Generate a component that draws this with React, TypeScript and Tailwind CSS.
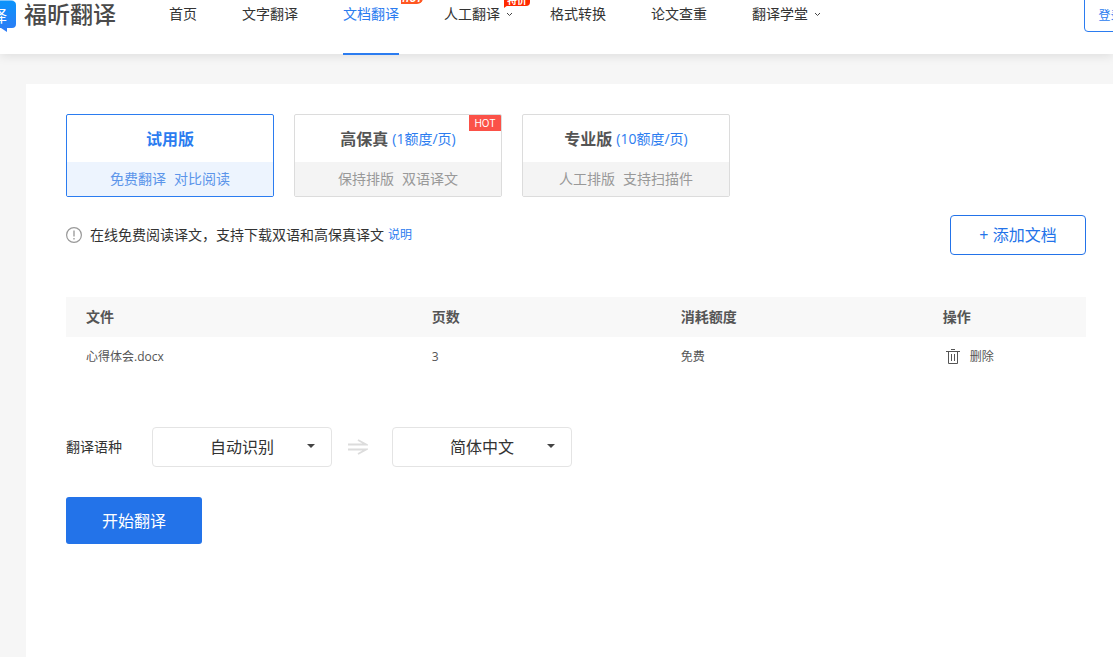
import { useState } from 'react';

type Plan = {
  id: string;
  name: string;
  price?: string;
  features: string[];
  hot?: boolean;
};

type NavItem = {
  label: string;
  active?: boolean;
  menu?: boolean;
  badge?: "hot" | "sale";
};

const navItems: NavItem[] = [
  { label: "首页" },
  { label: "文字翻译" },
  { label: "文档翻译", active: true, badge: "hot" },
  { label: "人工翻译", menu: true, badge: "sale" },
  { label: "格式转换" },
  { label: "论文查重" },
  { label: "翻译学堂", menu: true },
];

const plans: Plan[] = [
  { id: "trial", name: "试用版", features: ["免费翻译", "对比阅读"] },
  { id: "hifi", name: "高保真", price: "(1额度/页)", features: ["保持排版", "双语译文"], hot: true },
  { id: "pro", name: "专业版", price: "(10额度/页)", features: ["人工排版", "支持扫描件"] },
];

function Logo() {
  return (
    <a href="#" className="flex shrink-0 items-start -ml-4">
      <span className="relative block h-8 w-8">
        <svg className="block h-8 w-8" viewBox="0 0 32 32" aria-hidden="true">
          <defs>
            <linearGradient id="logoBlue" x1="0" y1="0" x2="0" y2="1">
              <stop offset="0" stopColor="#0a93fb" />
              <stop offset="1" stopColor="#2f7bf5" />
            </linearGradient>
          </defs>
          <path d="M0 0h27q3 0 3 2H0z" fill="#7cc3fb" />
          <path d="M0 1h28q4 0 4 4v19q0 4-4 4h-5v4l-6-4H0z" fill="url(#logoBlue)" />
        </svg>
        <span className="absolute left-[7px] top-1 text-base leading-6 text-white">译</span>
      </span>
      <span className="ml-2 text-[23px] leading-7 font-medium text-[#4a4a4a]">福昕翻译</span>
    </a>
  );
}

function NavLink({ item }: { item: NavItem }) {
  return (
    <a
      href="#"
      className={`relative block h-[55px] shrink-0 border-b-2 text-sm leading-7 ${
        item.active ? "border-[#2b7cf0] text-[#2b7cf0]" : "border-transparent text-[#333]"
      } ${item.menu ? "pr-[5px]" : ""}`}
    >
      {item.label}
      {item.menu && (
        <svg className="absolute -right-2 top-3 h-[5px] w-[7px]" viewBox="0 0 7 5" fill="none" stroke="#444" aria-hidden="true">
          <path d="M1 1l2.5 2.5L6 1" />
        </svg>
      )}
      {item.badge === "hot" && (
        <span className="absolute -right-6 -top-2 h-3 w-[22px] rounded-br-md rounded-tl-md bg-[#ff5722] text-center text-[10px] leading-3 font-bold text-white italic">
          HOT
        </span>
      )}
      {item.badge === "sale" && (
        <span className="absolute -right-[25px] -top-2 h-[14px] w-[26px] rounded-sm rounded-bl-none bg-[#ff2a00] text-center text-[10px] leading-4 font-bold text-white">
          特价
          <svg className="absolute left-0 top-[13px] h-[3px] w-1" viewBox="0 0 4 3" aria-hidden="true">
            <path d="M0 0h4L0 3z" fill="#ff2a00" />
          </svg>
        </span>
      )}
    </a>
  );
}

function PlanCard({ plan, active, onSelect }: { plan: Plan; active: boolean; onSelect: () => void }) {
  return (
    <button
      type="button"
      aria-pressed={active}
      onClick={onSelect}
      className={`relative w-52 overflow-hidden rounded-xs border ${
        active ? "border-[#2b7cf0]" : "border-[#dcdcdc]"
      }`}
    >
      <span className="flex h-[47px] items-center justify-center gap-1 leading-6">
        <span className={`text-base leading-6 font-bold ${active ? "text-[#2b7cf0]" : "text-[#555]"}`}>{plan.name}</span>
        {plan.price && <span className="text-sm leading-6 text-[#2b7cf0]">{plan.price}</span>}
      </span>
      <span
        className={`flex h-[34px] items-center justify-center gap-2 text-sm ${
          active ? "bg-[#edf4fe] text-[#5c95ea]" : "bg-[#f4f4f4] text-[#999]"
        }`}
      >
        {plan.features.map((f) => (
          <span key={f}>{f}</span>
        ))}
      </span>
      {plan.hot && (
        <span className="absolute right-0 top-0 h-4 w-8 bg-[#fb5148] font-['Inter',sans-serif] text-[10px] leading-4 text-white">
          HOT
        </span>
      )}
    </button>
  );
}

function LangSelect({ id, label, options }: { id: string; label: string; options: string[] }) {
  return (
    <div className="relative">
      <select
        id={id}
        aria-label={label}
        className="block h-10 w-[180px] appearance-none rounded-sm border border-[#e4e4e4] bg-white text-center text-base text-[#333]"
      >
        {options.map((o) => (
          <option key={o}>{o}</option>
        ))}
      </select>
      <svg className="pointer-events-none absolute right-[17px] top-[17px] h-1 w-2" viewBox="0 0 8 4" aria-hidden="true">
        <path d="M0 0h8L4 4z" fill="#444" />
      </svg>
    </div>
  );
}

function App() {
  const [plan, setPlan] = useState("trial");

  return (
    <div className="flex min-h-screen flex-col overflow-hidden bg-[#f6f6f6] font-['Open_Sans','Noto_Sans_CJK_SC',sans-serif] text-[#333]">
      {/* Header */}
      <header className="flex h-[54px] items-start bg-white shadow-[0_2px_10px_rgba(0,0,0,0.1)]">
        <Logo />
        <nav className="ml-[53px] flex gap-[45px]">
          {navItems.map((item) => (
            <NavLink key={item.label} item={item} />
          ))}
        </nav>
        <button type="button" className="-mr-[53px] -mt-1 ml-auto h-9 shrink-0 rounded-sm border border-[#2b7cf0] px-[14px] pt-1 text-xs text-[#2b7cf0]">
          登录/注册
        </button>
      </header>

      {/* Content */}
      <main className="mt-[30px] ml-[26px] flex-1 bg-white pt-[30px] pr-[27px] pb-10 pl-10">
        <div className="flex gap-5">
          {plans.map((p) => (
            <PlanCard key={p.id} plan={p} active={plan === p.id} onSelect={() => setPlan(p.id)} />
          ))}
        </div>

        <div className="mt-[18px] flex h-10 items-center justify-between">
          <p className="flex items-center text-sm">
            <svg className="mr-2 h-4 w-4" viewBox="0 0 16 16" fill="none" stroke="#999" aria-hidden="true">
              <circle cx="8" cy="8" r="7.4" strokeWidth="1.2" />
              <path d="M8 3.5v6M8 11v1.5" stroke="#aaa" strokeWidth="1.6" />
            </svg>
            在线免费阅读译文，支持下载双语和高保真译文
            <a href="#" className="ml-1 text-xs text-[#2b7cf0]">说明</a>
          </p>
          <button type="button" className="h-10 w-[136px] rounded-sm border border-[#2373e9] text-base text-[#2373e9]">
            + 添加文档
          </button>
        </div>

        <table className="mt-[42px] w-full table-fixed text-left text-[#555]">
          <thead className="bg-[#f8f8f8] text-sm">
            <tr className="h-10">
              <th className="w-[33.9%] pl-5 font-bold">文件</th>
              <th className="w-[24.4%] pl-5 font-bold">页数</th>
              <th className="w-[25.7%] pl-5 font-bold">消耗额度</th>
              <th className="w-[16%] pl-5 font-bold">操作</th>
            </tr>
          </thead>
          <tbody className="text-xs">
            <tr className="h-10">
              <td className="pl-5">心得体会.docx</td>
              <td className="pl-5">3</td>
              <td className="pl-5">免费</td>
              <td className="pl-5">
                <button type="button" className="ml-[3px] flex items-center gap-[10px]">
                  <svg className="h-4 w-[14px]" viewBox="0 0 14 16" fill="none" stroke="#555" aria-hidden="true">
                    <path d="M0 2.5h14M5 .5h4M2.5 2.5v12h9v-12M5.5 5v7M8.5 5v7" />
                  </svg>
                  删除
                </button>
              </td>
            </tr>
          </tbody>
        </table>

        <div className="mt-[50px] flex items-center">
          <label htmlFor="source" className="mr-[30px] text-sm">翻译语种</label>
          <LangSelect id="source" label="翻译语种" options={["自动识别", "英语", "日语"]} />
          <svg className="mr-6 ml-4 h-4 w-5" viewBox="0 0 20 16" fill="none" stroke="#dcdcdc" strokeWidth="1.8" aria-hidden="true">
            <path d="M0 5.5h18L10 1M0 10.500h18L10 15" />
          </svg>
          <LangSelect id="target" label="目标语种" options={["简体中文", "英语", "日语"]} />
        </div>

        <button type="button" className="mt-[30px] block h-[47px] w-[136px] rounded-[3px] bg-[#2373e9] text-base text-white">
          开始翻译
        </button>
      </main>
    </div>
  );
}

export default App;
